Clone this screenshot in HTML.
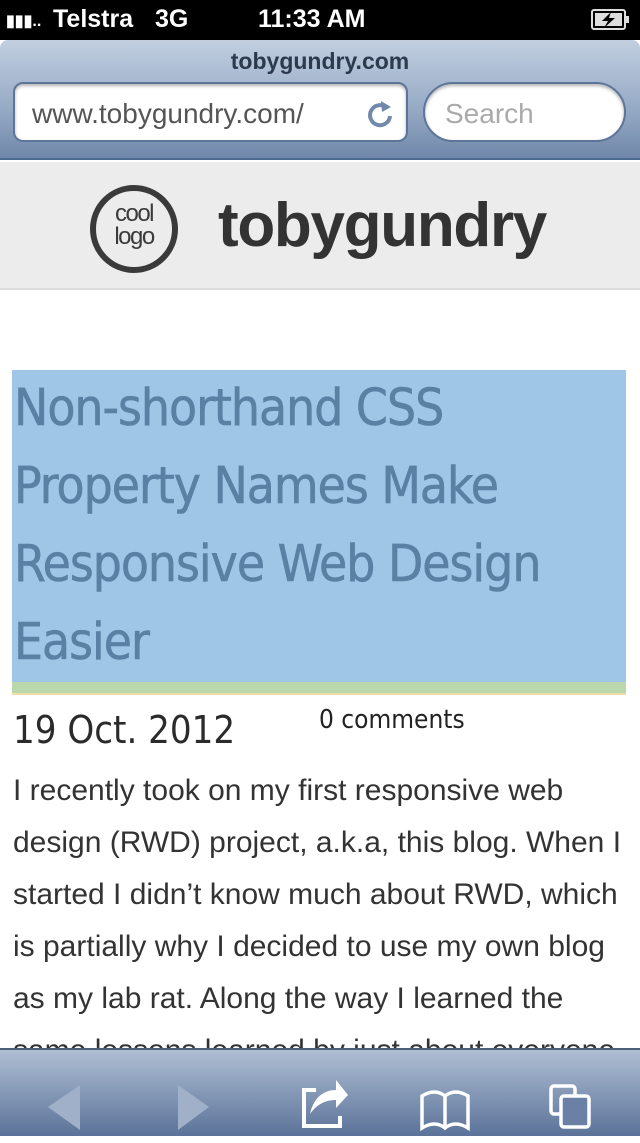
<!DOCTYPE html>
<html><head><meta charset="utf-8"><style>
*{margin:0;padding:0;box-sizing:border-box}
body{width:640px;height:1136px;overflow:hidden;background:#fff;font-family:"Liberation Sans",sans-serif;position:relative}
.status{position:absolute;top:0;left:0;width:640px;height:40px;background:#000;color:#fff;font-weight:bold;font-size:25px}
.status span{position:absolute;top:5px}
.nav{position:absolute;top:40px;left:0;width:640px;height:120px;background:linear-gradient(#c1cfe0,#95a9c4 60%,#6f87aa);border-bottom:2px solid #4f6a90;border-radius:8px 8px 0 0}
.nav .t{position:absolute;top:8px;width:100%;text-align:center;font-weight:bold;font-size:23px;color:#2d3a4d}
.url{position:absolute;left:13px;top:42px;width:395px;height:60px;background:#fff;border:2px solid #5c7598;border-radius:10px;font-size:28px;color:#555;padding:14px 0 0 17px;box-shadow:inset 0 2px 3px rgba(0,0,0,.3)}
.search{position:absolute;left:423px;top:42px;width:203px;height:60px;background:#fff;border:2px solid #5c7598;border-radius:30px;font-size:28px;color:#aaa;padding:14px 0 0 20px;box-shadow:inset 0 2px 3px rgba(0,0,0,.3)}
.hdr{position:absolute;top:162px;left:0;width:640px;height:128px;background:#ececec;border-bottom:2px solid #ddd}
.logo{position:absolute;left:90px;top:23px;width:88px;height:88px;border:6px solid #3a3a3a;border-radius:50%;text-align:center;font-size:24px;line-height:23px;color:#3a3a3a;padding-top:11px;letter-spacing:-1.5px}
.name{position:absolute;left:218px;top:28px;font-size:62px;font-weight:bold;color:#333;letter-spacing:-1.3px}
.title{position:absolute;left:12px;top:370px;width:614px;height:312px;background:#9fc5e7;color:#5a80a4;font-family:"DejaVu Sans Condensed","DejaVu Sans",sans-serif;font-size:51px;line-height:78px;padding:0 0 0 2px;letter-spacing:-1px;-webkit-text-stroke:0.6px #5a80a4}
.green{position:absolute;left:12px;top:682px;width:614px;height:13px;background:#bad8ac;border-bottom:2px solid #f0dca8}
.date{position:absolute;left:13px;top:708px;font-family:"DejaVu Sans Condensed",sans-serif;font-size:38px;color:#2b2b2b}
.com{position:absolute;left:319px;top:705px;font-family:"DejaVu Sans Condensed",sans-serif;font-size:26px;color:#222}
.body{position:absolute;left:13px;top:765px;width:620px;font-size:30px;line-height:52px;color:#333}
.tb{position:absolute;top:1048px;left:0;width:640px;height:88px;background:linear-gradient(#afbed3,#5b7399);border-top:2px solid #4e5f78}
</style></head><body>
<div class="body">I recently took on my first responsive web design (RWD) project, a.k.a, this blog. When I started I didn’t know much about RWD, which is partially why I decided to use my own blog as my lab rat. Along the way I learned the same lessons learned by just about everyone</div>
<div class="status"><span style="left:6px;font-size:16px;top:11px">▮▮▮..</span><span style="left:53px">Telstra</span><span style="left:155px">3G</span><span style="left:258px">11:33 AM</span>
<svg style="position:absolute;left:591px;top:9px" width="40" height="22"><rect x="1" y="1" width="33" height="19" rx="2" fill="none" stroke="#ddd" stroke-width="2"/><rect x="35" y="7" width="3" height="7" fill="#ddd"/><rect x="4" y="4" width="27" height="13" fill="#ddd"/><path d="M20 3 L11 12 L17 12 L13 19 L24 9 L18 9 Z" fill="#000"/></svg></div>
<div class="nav"><div class="t">tobygundry.com</div>
<div class="url">www.tobygundry.com/
<svg style="position:absolute;left:352px;top:15px" width="28" height="30"><path d="M20 9 A10 10 0 1 0 23 17" fill="none" stroke="#7189aa" stroke-width="4"/><path d="M14 2 L24 8 L15 13 Z" fill="#7189aa"/></svg></div>
<div class="search">Search</div></div>
<div class="hdr"><div class="logo">cool<br>logo</div><div class="name">tobygundry</div></div>
<div class="title">Non-shorthand CSS<br>Property Names Make<br>Responsive Web Design<br>Easier</div>
<div class="green"></div>
<div class="date">19 Oct. 2012</div>
<div class="com">0 comments</div>
<div class="tb">
<svg width="640" height="88">
<path d="M48 57 L80 35 L80 80 Z" fill="#9fb0c8"/>
<path d="M178 35 L209 57 L178 80 Z" fill="#9fb0c8"/>
<g fill="none" stroke="#fff" stroke-width="4"><path d="M316 40 L304 40 L304 76 L340 76 L340 66"/></g>
<path d="M310 64 C314 46 325 40 336 40 L336 30 L348 45 L336 58 L336 50 C325 50 316 55 310 64 Z" fill="#fff"/>
<path d="M422 78 L422 46 Q435 38 445 46 Q455 38 468 46 L468 78 Q455 70 445 78 Q435 70 422 78 Z M445 46 L445 76" fill="none" stroke="#fff" stroke-width="3.5"/>
<rect x="551" y="36" width="24" height="28" rx="3" fill="none" stroke="#fff" stroke-width="3.5"/>
<rect x="561" y="46" width="28" height="31" rx="3" fill="#6a81a5" stroke="#fff" stroke-width="3.5"/>
</svg></div>
</body></html>
